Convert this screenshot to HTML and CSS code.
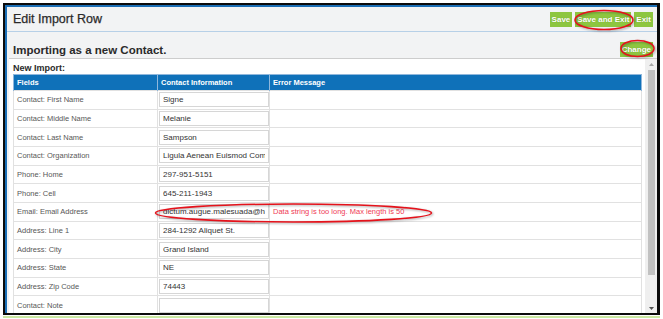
FILE: index.html
```html
<!DOCTYPE html>
<html lang="en">
<head>
  <meta charset="UTF-8" />
  <meta name="viewport" content="width=device-width, initial-scale=1" />
  <title>Edit Import Row</title>
  <link rel="stylesheet" href="styles.css">
</head>
<body>
  <div class="frame">
    <div class="window">
      <div class="titlebar">
        <h1>Edit Import Row</h1>
        <div class="actions">
          <button class="btn">Save</button>
          <button class="btn">Save and Exit</button>
          <button class="btn">Exit</button>
        </div>
      </div>

      <div class="subhead">
        <h2>Importing as a new Contact.</h2>
        <button class="btn">Change</button>
      </div>

      <div class="panel">
        <div class="panel-body">
          <div class="panel-label">New Import:</div>
          <table class="import-table">
            <colgroup>
              <col class="col-field">
              <col class="col-value">
              <col>
            </colgroup>
            <thead>
              <tr>
                <th>Fields</th>
                <th>Contact Information</th>
                <th>Error Message</th>
              </tr>
            </thead>
            <tbody>
              <tr><td>Contact: First Name</td><td><input type="text" value="Signe"></td><td></td></tr>
              <tr><td>Contact: Middle Name</td><td><input type="text" value="Melanie"></td><td></td></tr>
              <tr><td>Contact: Last Name</td><td><input type="text" value="Sampson"></td><td></td></tr>
              <tr><td>Contact: Organization</td><td><input type="text" value="Ligula Aenean Euismod Company"></td><td></td></tr>
              <tr><td>Phone: Home</td><td><input type="text" value="297-951-5151"></td><td></td></tr>
              <tr><td>Phone: Cell</td><td><input type="text" value="645-211-1943"></td><td></td></tr>
              <tr><td>Email: Email Address</td><td><input type="text" value="dictum.augue.malesuada@hendrerit.consectetuer.cursus.edu"></td><td class="error">Data string is too long. Max length is 50</td></tr>
              <tr><td>Address: Line 1</td><td><input type="text" value="284-1292 Aliquet St."></td><td></td></tr>
              <tr><td>Address: City</td><td><input type="text" value="Grand Island"></td><td></td></tr>
              <tr><td>Address: State</td><td><input type="text" value="NE"></td><td></td></tr>
              <tr><td>Address: Zip Code</td><td><input type="text" value="74443"></td><td></td></tr>
              <tr><td>Contact: Note</td><td><input type="text" value=""></td><td></td></tr>
            </tbody>
          </table>
        </div>

        <div class="scrollbar">
          <div class="scroll-btn">
            <svg width="5" height="3" viewBox="0 0 5 3"><path d="M0 3L2.5 0L5 3z" fill="#a6a6a6"/></svg>
          </div>
          <div class="scroll-thumb"></div>
          <div class="scroll-btn">
            <svg width="5" height="3" viewBox="0 0 5 3"><path d="M0 0L2.5 3L5 0z" fill="#505050"/></svg>
          </div>
        </div>
      </div>
    </div>
  </div>
  <div class="footer-line"></div>

  <!-- red annotation marks drawn over the screenshot -->
  <svg class="marks" width="663" height="319" viewBox="0 0 663 319">
    <ellipse cx="604" cy="20" rx="29" ry="9.5" />
    <ellipse cx="637.5" cy="48.5" rx="16.5" ry="8" />
    <ellipse cx="293.5" cy="213" rx="138" ry="9" />
  </svg>
</body>
</html>
```

FILE: styles.css
```css
body {
  margin: 0;
  background: #fff;
  font-family: "Liberation Sans", Arial, sans-serif;
  color: #333;
  position: relative;
  width: 663px;
  height: 319px;
  overflow: hidden;
}

.frame {
  margin: 3px 0 0 3px;
  width: 657px;
  height: 312px;
  box-sizing: border-box;
  border: solid #0b0b0b;
  border-width: 2px 3px 2px 2px;
}
.window {
  height: 100%;
  box-sizing: border-box;
  border-top: 2px solid #1c6fb6;
  border-left: 2px solid #1c6fb6;
  background: #f2f3f4;
  display: flex;
  flex-direction: column;
}

.titlebar {
  height: 24px;
  flex: none;
  border-bottom: 1px solid #b7d0e7;
  display: flex;
  align-items: center;
  justify-content: space-between;
  padding: 0 4px 0 6px;
}
h1 {
  margin: 0;
  font-size: 12.5px;
  font-weight: normal;
  color: #2a2a2a;
  -webkit-text-stroke: 0.25px #2a2a2a;
}
.actions {
  display: flex;
  gap: 3px;
}
.btn {
  height: 15px;
  padding: 0 2px;
  border: none;
  background: #8dc640;
  color: #fff;
  font-family: inherit;
  font-size: 8px;
  font-weight: bold;
  line-height: 15px;
  cursor: pointer;
  text-shadow: 0 0 1px rgba(60, 90, 20, 0.4);
}
.btn:hover {
  background: #7db532;
}

.subhead {
  height: 26px;
  flex: none;
  box-sizing: border-box;
  padding: 9px 4px 0 6px;
  display: flex;
  align-items: center;
  justify-content: space-between;
}
h2 {
  margin: 0;
  font-size: 11.5px;
  font-weight: bold;
  color: #2a2a2a;
}

/* Import panel with its scrollbar */
.panel {
  flex: 1;
  min-height: 0;
  margin-left: 2px;
  border-top: 1px solid #cdcdcd;
  background: #fff;
  display: flex;
}
.panel-body {
  flex: 1;
  min-width: 0;
  overflow: hidden;
  padding: 3px 3px 0 4px;
}
.scrollbar {
  width: 12px;
  flex: none;
  background: #efefef;
  display: flex;
  flex-direction: column;
}
.scroll-btn {
  height: 10px;
  display: flex;
  align-items: center;
  justify-content: center;
}
.scroll-thumb {
  height: 205px;
  margin: 1px 2px 0 3px;
  background: #c1c1c1;
}
.scroll-btn:last-child {
  margin-top: auto;
}

.panel-label {
  font-size: 9px;
  font-weight: bold;
  line-height: 12px;
  color: #2a2a2a;
}

.import-table {
  width: 629px;
  border-collapse: collapse;
  table-layout: fixed;
  font-size: 7.5px;
}
.col-field {
  width: 144px;
}
.col-value {
  width: 112px;
}
.import-table th {
  height: 16px;
  padding: 0 3px;
  box-sizing: border-box;
  background: #0f71b9;
  color: #fff;
  font-weight: bold;
  text-align: left;
  border: 1px solid #8fb7dc;
  border-bottom: none;
}
.import-table td {
  height: 18.67px;
  padding: 0 3px;
  box-sizing: border-box;
  border: 1px solid #e1e1e1;
  color: #575757;
  vertical-align: middle;
}
.import-table td:nth-child(2) {
  padding: 0 1px;
}
.import-table td.error {
  color: #ef3b55;
}
.import-table input {
  display: block;
  width: 110px;
  height: 15px;
  box-sizing: border-box;
  margin: 0;
  padding: 0 3px;
  border: 1px solid #d6d6d6;
  font-family: inherit;
  font-size: 8px;
  color: #333;
  background: #fff;
}

.footer-line {
  margin: 1px 0 0 3px;
  width: 657px;
  height: 2px;
  background: #cbe8a3;
}

.marks {
  position: absolute;
  top: 0;
  left: 0;
  pointer-events: none;
  filter: drop-shadow(1px 1.5px 1px rgba(0, 0, 0, 0.35));
}
.marks ellipse {
  fill: none;
  stroke: #e5121b;
  stroke-width: 1.6;
}
```
